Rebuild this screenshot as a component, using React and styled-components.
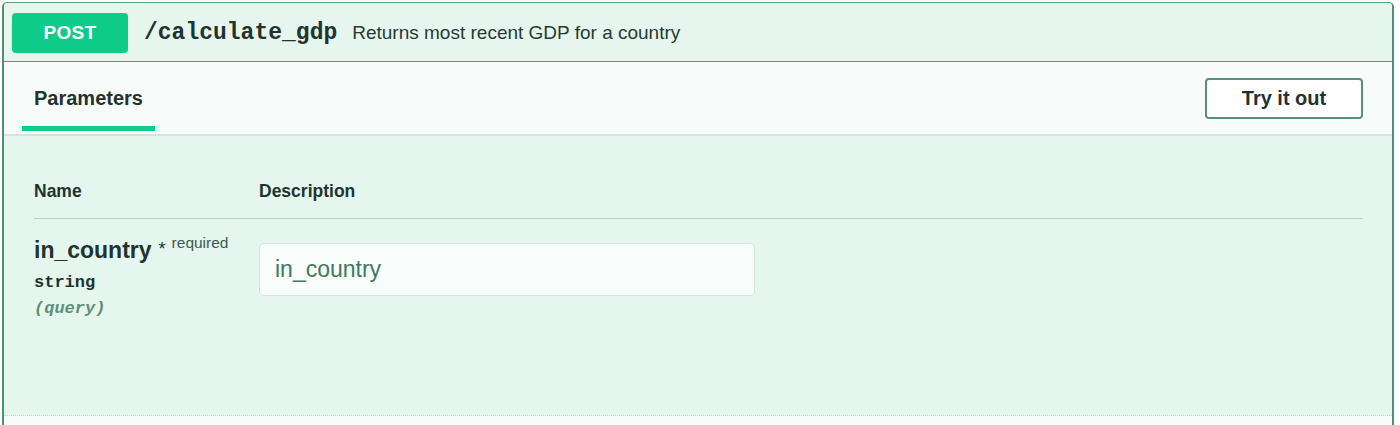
import React from 'react';
import styled, { createGlobalStyle } from 'styled-components';

const GlobalStyle = createGlobalStyle`
    html, body {
        margin: 0;
        padding: 0;
        background: #ffffff;
        font-family: 'Liberation Sans', Arial, sans-serif;
        color: #263a34;
        overflow: hidden;
    }
`;

const Page = styled.div`
    padding: 2px 6px 0 2px;
    height: 425px;
    box-sizing: border-box;
`;

const Opblock = styled.div`
    border: 1px solid #5aa386;
    border-left: 2px solid #4f8f77;
    border-right: 2px solid #4f8f77;
    border-bottom: none;
    border-radius: 5px 5px 0 0;
    background: #f7fcfa;
    height: 430px;
    box-sizing: border-box;
`;

const Summary = styled.div`
    display: flex;
    align-items: center;
    height: 57px;
    padding: 1px 8px 0;
    background: #e6f6ee;
    border-bottom: 1px solid #4f9a7c;
    border-radius: 4px 4px 0 0;
`;

const Method = styled.span`
    display: inline-flex;
    align-items: center;
    justify-content: center;
    width: 116px;
    height: 40px;
    border-radius: 4px;
    background: #0fcb8a;
    color: #ffffff;
    font-weight: 700;
    font-size: 19px;
    letter-spacing: 0.3px;
`;

const Path = styled.span`
    margin-left: 16px;
    font-family: 'Liberation Mono', 'Courier New', monospace;
    font-weight: 700;
    font-size: 23px;
    color: #22332e;
`;

const Description = styled.span`
    margin-left: 15px;
    font-size: 19px;
    color: #263a34;
`;

const TabBar = styled.div`
    display: flex;
    align-items: center;
    justify-content: space-between;
    height: 72px;
    padding: 0 29px 0 18px;
    border-bottom: 2px solid #d5e3dd;
    background: #f7fcfa;
`;

const Tab = styled.div`
    position: relative;
    align-self: stretch;
    display: flex;
    align-items: center;
    padding: 0 12px;
    font-weight: 700;
    font-size: 20px;
    color: #22332e;

    &::after {
        content: '';
        position: absolute;
        left: 0;
        right: 0;
        bottom: 3px;
        height: 5px;
        background: #10cc8b;
    }
`;

const TryButton = styled.button`
    width: 158px;
    height: 41px;
    border: 2px solid #5a8f7b;
    border-radius: 4px;
    background: #ffffff;
    font-family: 'Liberation Sans', Arial, sans-serif;
    font-weight: 700;
    font-size: 20px;
    color: #22332e;
    cursor: pointer;
`;

const Body = styled.div`
    height: 280px;
    box-sizing: border-box;
    padding: 44px 29px 0 30px;
    background: #e4f6ed;
    border-bottom: 1px dotted #b5dac8;
`;

const HeadRow = styled.div`
    display: grid;
    grid-template-columns: 225px 1fr;
    padding-bottom: 16px;
    border-bottom: 1px solid #a6dcc3;
`;

const HeadCell = styled.div`
    font-weight: 700;
    font-size: 17.5px;
    line-height: 22px;
    color: #22332e;
`;

const ParamRow = styled.div`
    display: grid;
    grid-template-columns: 225px 1fr;
    padding-top: 11px;
`;

const NameCell = styled.div`
    display: flex;
    flex-direction: column;
`;

const ParamName = styled.div`
    font-weight: 700;
    font-size: 23px;
    line-height: 28px;
    color: #22332e;

    span {
        font-size: 18px;
        font-weight: 400;
        margin-left: 7px;
        position: relative;
        top: -3px;
    }

    sup {
        font-size: 15.5px;
        font-weight: 400;
        color: #3c5b50;
        margin-left: 6px;
        position: relative;
        top: -1px;
    }
`;

const ParamType = styled.div`
    margin-top: 6px;
    font-family: 'Liberation Mono', 'Courier New', monospace;
    font-weight: 700;
    font-size: 17px;
    line-height: 22px;
    color: #22332e;
`;

const ParamIn = styled.div`
    margin-top: 4px;
    font-family: 'Liberation Mono', 'Courier New', monospace;
    font-style: italic;
    font-weight: 700;
    font-size: 17px;
    line-height: 22px;
    color: #5c8f7b;
`;

const Input = styled.input`
    margin-top: 13px;
    width: 496px;
    height: 53px;
    box-sizing: border-box;
    padding: 0 15px;
    border: 1px solid #d3e4dc;
    border-radius: 5px;
    background: #f8fcfa;
    font-family: 'Liberation Sans', Arial, sans-serif;
    font-size: 23px;
    outline: none;

    &::placeholder {
        color: #3d7a61;
    }
`;

export default function App() {
    return (
        <Page>
            <GlobalStyle />
            <Opblock>
                <Summary>
                    <Method>POST</Method>
                    <Path>/calculate_gdp</Path>
                    <Description>Returns most recent GDP for a country</Description>
                </Summary>
                <TabBar>
                    <Tab>Parameters</Tab>
                    <TryButton>Try it out</TryButton>
                </TabBar>
                <Body>
                    <HeadRow>
                        <HeadCell>Name</HeadCell>
                        <HeadCell>Description</HeadCell>
                    </HeadRow>
                    <ParamRow>
                        <NameCell>
                            <ParamName>
                                in_country<span>*</span>
                                <sup>required</sup>
                            </ParamName>
                            <ParamType>string</ParamType>
                            <ParamIn>(query)</ParamIn>
                        </NameCell>
                        <div>
                            <Input placeholder="in_country" />
                        </div>
                    </ParamRow>
                </Body>
            </Opblock>
        </Page>
    );
}
